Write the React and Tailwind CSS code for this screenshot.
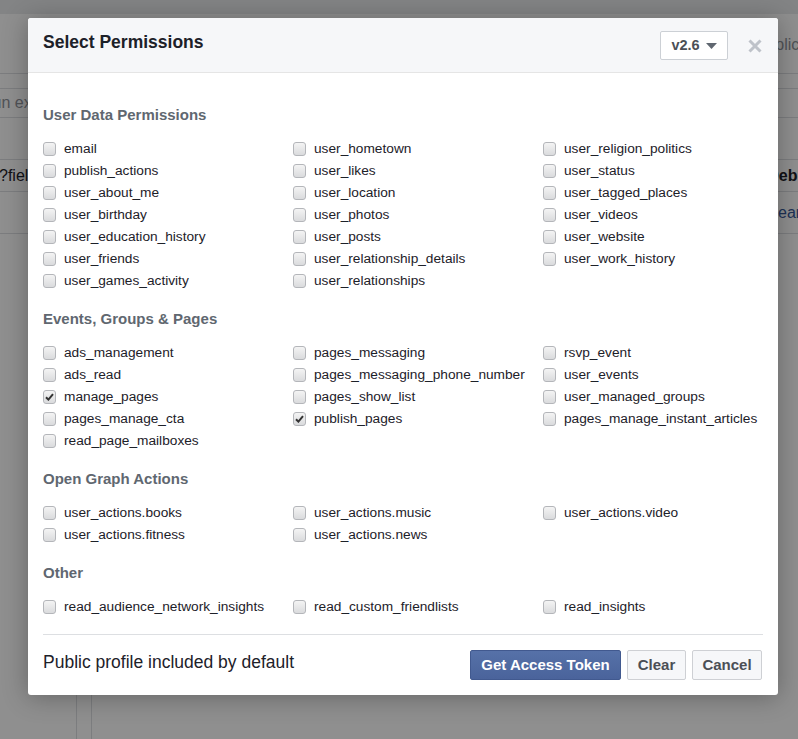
import React from 'react';

const sections = [
  {
    title: 'User Data Permissions',
    items: [
      'email', 'user_hometown', 'user_religion_politics',
      'publish_actions', 'user_likes', 'user_status',
      'user_about_me', 'user_location', 'user_tagged_places',
      'user_birthday', 'user_photos', 'user_videos',
      'user_education_history', 'user_posts', 'user_website',
      'user_friends', 'user_relationship_details', 'user_work_history',
      'user_games_activity', 'user_relationships',
    ],
  },
  {
    title: 'Events, Groups & Pages',
    items: [
      'ads_management', 'pages_messaging', 'rsvp_event',
      'ads_read', 'pages_messaging_phone_number', 'user_events',
      'manage_pages', 'pages_show_list', 'user_managed_groups',
      'pages_manage_cta', 'publish_pages', 'pages_manage_instant_articles',
      'read_page_mailboxes',
    ],
  },
  {
    title: 'Open Graph Actions',
    items: [
      'user_actions.books', 'user_actions.music', 'user_actions.video',
      'user_actions.fitness', 'user_actions.news',
    ],
  },
  {
    title: 'Other',
    items: ['read_audience_network_insights', 'read_custom_friendlists', 'read_insights'],
  },
];

const checkedByDefault = ['manage_pages', 'publish_pages'];

function Checkbox({ checked }) {
  return (
    <span className="w-[13px] h-[14px] shrink-0 rounded-[3px] border border-[#b4b6ba] bg-gradient-to-b from-[#f4f4f4] to-[#dadbdd] flex items-center justify-center -mt-[1px]">
      {checked && (
        <svg width="9" height="8" viewBox="0 0 9 8">
          <path d="M1 4.2 L3.4 6.6 L8 1.2" fill="none" stroke="#333" strokeWidth="2" />
        </svg>
      )}
    </span>
  );
}

function Backdrop() {
  return (
    <div className="h-[739px] bg-white flex flex-col">
      <div className="h-[14px] bg-[#e9ebee]" />
      <div className="h-[60px] border-b border-[#dddfe2] flex items-center justify-end text-[16px] text-[#90949c]">
        <span className="-mr-[36px] pt-[2px] whitespace-nowrap">Application</span>
      </div>
      <div className="h-[15px] border-b border-[#dddfe2]" />
      <div className="h-[29px] border-b border-[#dddfe2] flex items-center text-[16px] text-[#90949c]">
        <span className="-ml-[19px] whitespace-nowrap">Run example</span>
      </div>
      <div className="h-[42px] border-b border-[#dddfe2]" />
      <div className="h-[32px] border-b border-[#dddfe2] flex items-center justify-between text-[16px] text-[#1d2129]">
        <span className="-ml-[1px] whitespace-nowrap">?fields=id,name</span>
        <span className="font-bold -mr-[19px]">Debug</span>
      </div>
      <div className="h-[42px] border-b border-[#dddfe2] flex items-center justify-end text-[16px] text-[#365899]">
        <span className="-mr-[12px]">Learn</span>
      </div>
      <div className="flex-1 flex">
        <div className="w-[77px] border-r border-[#dddfe2]" />
        <div className="w-[15px] border-r border-[#dddfe2]" />
      </div>
    </div>
  );
}

export default function App() {
  return (
    <div className="relative w-[798px] h-[739px] overflow-hidden font-['Liberation_Sans',Arial,sans-serif]">
      <Backdrop />
      <div className="absolute inset-0 bg-[rgba(0,0,0,0.44)]" />

      <div className="absolute left-[28px] top-[18px] w-[750px] bg-white rounded-[3px] shadow-[0_2px_26px_rgba(0,0,0,0.3)]">
        <div className="h-[55px] bg-[#f6f7f9] border-b border-[#e5e5e5] rounded-t-[3px] flex items-center pl-[15px] pr-[16px]">
          <h1 className="text-[17.5px] font-bold text-[#1d2129] flex-1 -mt-[6px]">Select Permissions</h1>
          <button className="h-[29px] w-[68px] border border-[#ccd0d5] rounded-[2px] bg-white flex items-center justify-center gap-[6px] text-[14.5px] font-bold text-[#4b4f56] mr-[20px] mt-[1px]">
            v2.6
            <svg width="11" height="6" viewBox="0 0 11 6">
              <path d="M0 0 L11 0 L5.5 6 Z" fill="#606770" />
            </svg>
          </button>
          <svg width="14" height="14" viewBox="0 0 14 14" className="mt-[2px]">
            <path d="M1.5 1.5 L12.5 12.5 M12.5 1.5 L1.5 12.5" stroke="#bec2c9" strokeWidth="3" />
          </svg>
        </div>

        <div className="px-[15px] pt-[32px]">
          {sections.map((section, idx) => (
            <div key={section.title} className={idx > 0 ? 'mt-[17px]' : ''}>
              <h2 className="text-[15px] leading-[20px] font-bold text-[#606770] mb-[13px]">{section.title}</h2>
              <div className="grid grid-cols-[250px_250px_220px]">
                {section.items.map((item) => (
                  <label key={item} className="h-[22px] flex items-center gap-[8px] text-[13.7px] text-[#1d2129] whitespace-nowrap">
                    <Checkbox checked={checkedByDefault.includes(item)} />
                    {item}
                  </label>
                ))}
              </div>
            </div>
          ))}

          <div className="mt-[16px] border-t border-[#dddfe2] pt-[15px] pb-[15px] flex items-center">
            <span className="flex-1 text-[17.5px] text-[#1d2129] -mt-[5px]">Public profile included by default</span>
            <div className="flex gap-[6px] mr-[1px]">
              <button className="h-[30px] w-[151px] rounded-[2px] border border-[#41598f] bg-gradient-to-b from-[#5671a8] to-[#4a639b] text-white text-[15px] font-bold">
                Get Access Token
              </button>
              <button className="h-[30px] w-[59px] rounded-[2px] border border-[#ced0d4] bg-[#f6f7f9] text-[#4b4f56] text-[15px] font-bold">
                Clear
              </button>
              <button className="h-[30px] w-[70px] rounded-[2px] border border-[#ced0d4] bg-[#f6f7f9] text-[#4b4f56] text-[15px] font-bold">
                Cancel
              </button>
            </div>
          </div>
        </div>
      </div>
    </div>
  );
}
